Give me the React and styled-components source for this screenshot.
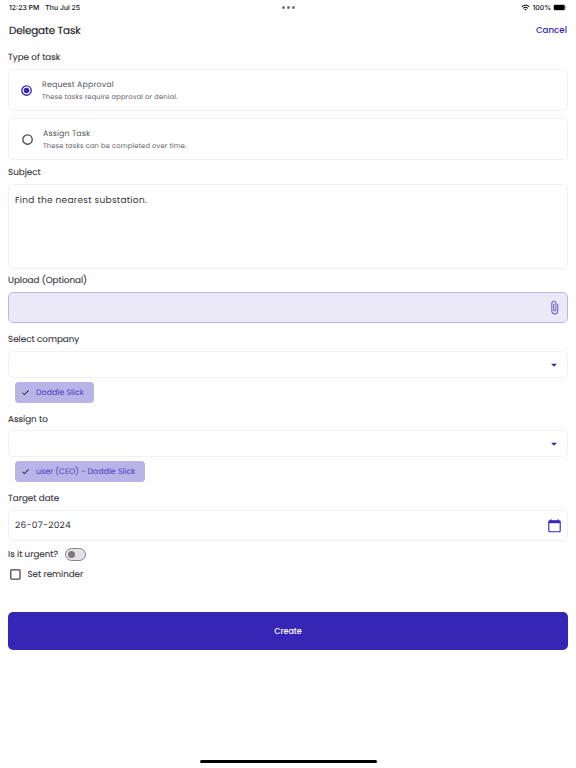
import { useState } from "react";
import styled, { createGlobalStyle } from "styled-components";
import { MdWifi, MdAttachFile, MdCheck, MdArrowDropDown } from "react-icons/md";

export default function App() {
    const [taskType, setTaskType] = useState("approval");
    const [subject, setSubject] = useState("Find the nearest substation.");

    return (
        <>
            <GlobalStyle />
            <Screen>
                <StatusBar>
                    <StatusTime><span>12:23 PM</span><span>Thu Jul 25</span></StatusTime>
                    <Dots><Dot /><Dot /><Dot /></Dots>
                    <StatusRight>
                        <MdWifi size={9} />
                        <span>100%</span>
                        <BatteryIcon />
                    </StatusRight>
                </StatusBar>
                <Header>
                    <Title>Delegate Task</Title>
                    <CancelButton>Cancel</CancelButton>
                </Header>
                <Form>
                    <Label $height={23} $top={2}>Type of task</Label>
                    <TaskOption
                        title="Request Approval"
                        info="These tasks require approval or denial."
                        checked={taskType === "approval"}
                        onClick={() => setTaskType("approval")}
                    />
                    <TaskOption
                        title="Assign Task"
                        info="These tasks can be completed over time."
                        checked={taskType === "assign"}
                        onClick={() => setTaskType("assign")}
                    />
                    <Label $height={24} $top={2}>Subject</Label>
                    <SubjectInput value={subject} onChange={(e) => setSubject(e.target.value)} spellCheck={false} />
                    <Label $height={23} $top={2}>Upload (Optional)</Label>
                    <UploadBox><MdAttachFile size={15} /></UploadBox>
                    <Label $height={28} $top={7}>Select company</Label>
                    <SelectBox><MdArrowDropDown size={14} /></SelectBox>
                    <Chip $width={79}><MdCheck size={9} /><ChipText>Doddle Slick</ChipText></Chip>
                    <Label $height={27} $top={7}>Assign to</Label>
                    <SelectBox><MdArrowDropDown size={14} /></SelectBox>
                    <Chip $width={130}><MdCheck size={9} /><ChipText>user (CEO) - Doddle Slick</ChipText></Chip>
                    <Label $height={28} $top={6}>Target date</Label>
                    <DateBox><DateText>26-07-2024</DateText><CalendarIcon /></DateBox>
                    <UrgentRow><RowText>Is it urgent?</RowText><Toggle><Knob /></Toggle></UrgentRow>
                    <ReminderRow><CheckBoxIcon /><RowText>Set reminder</RowText></ReminderRow>
                    <CreateButton>Create</CreateButton>
                </Form>
                <HomeBar />
            </Screen>
        </>
    );
}

function TaskOption({ title, info, checked, onClick }) {
    return (
        <OptionCard onClick={onClick} $checked={checked}>
            <RadioIcon checked={checked} />
            <OptionTexts>
                <OptionTitle>{title}</OptionTitle>
                <OptionInfo>{info}</OptionInfo>
            </OptionTexts>
        </OptionCard>
    );
}

function RadioIcon({ checked }) {
    const color = checked ? "#3626b5" : "#4c4c51";
    return (
        <svg width="11" height="11" viewBox="0 0 11 11">
            <circle cx="5.5" cy="5.5" r="4.7" fill="#fff" stroke={color} strokeWidth="1.35" />
            {checked && <circle cx="5.5" cy="5.5" r="2.8" fill={color} />}
        </svg>
    );
}

function CheckBoxIcon() {
    return (
        <svg width="11" height="11" viewBox="0 0 11 11">
            <rect x="0.8" y="0.8" width="9.2" height="9.2" rx="0.8" fill="#fff" stroke="#444449" strokeWidth="1.25" />
        </svg>
    );
}

function BatteryIcon() {
    return (
        <svg width="14" height="7" viewBox="0 0 14 7">
            <rect x="0.3" y="0.5" width="12" height="6" rx="1.8" fill="#fff" stroke="#999" strokeWidth="0.5" />
            <rect x="0.9" y="1" width="10.8" height="5" rx="1.2" fill="#000" />
            <path d="M12.9 2.5v2q.8-.3.8-1t-.8-1z" fill="#999" />
        </svg>
    );
}

function CalendarIcon() {
    return (
        <svg width="13" height="14" viewBox="0 0 13 14">
            <path d="M3 0.3v2M10 0.3v2" stroke="#3626b5" strokeWidth="1.1" />
            <rect x="0.8" y="1.8" width="11.4" height="11" rx="1" fill="none" stroke="#3626b5" strokeWidth="1.1" />
            <rect x="0.8" y="1.8" width="11.4" height="2.4" fill="#3626b5" />
        </svg>
    );
}

const GlobalStyle = createGlobalStyle`
    * {
        box-sizing: border-box;
    }
    body {
        margin: 0;
        background: #fefefe;
        color: #333337;
        font-family: Poppins, Inter, "Liberation Sans", sans-serif;
        text-rendering: geometricPrecision;
    }
    button, textarea {
        font: inherit;
    }
    svg {
        flex-shrink: 0;
    }
`

const Screen = styled.div`
    display: flex;
    flex-direction: column;
    height: 768px;
    overflow: hidden;
`

const StatusBar = styled.div`
    display: grid;
    grid-template-columns: 1fr auto 1fr;
    align-items: center;
    height: 14px;
    padding: 0 9px;
    font-family: Inter, "Liberation Sans", sans-serif;
    font-size: 6.9px;
    font-weight: 500;
    color: #111;
`

const StatusTime = styled.div`
    display: flex;
    gap: 6px;
`

const Dots = styled.div`
    display: flex;
    gap: 2px;
`

const Dot = styled.div`
    width: 3px;
    height: 3px;
    border-radius: 50%;
    background: #777;
`

const StatusRight = styled.div`
    display: flex;
    align-items: center;
    justify-content: flex-end;
    gap: 2px;
`

const Header = styled.div`
    display: flex;
    align-items: center;
    justify-content: space-between;
    height: 32px;
    padding: 0 9px;
`

const Title = styled.div`
    padding-top: 1px;
    font-size: 10.4px;
    letter-spacing: -0.14px;
    color: #26262a;
    -webkit-text-stroke: 0.2px;
`

const CancelButton = styled.button`
    padding: 0;
    border: 0;
    background: none;
    color: #3626b5;
    font-size: 8.7px;
    font-weight: 500;
`

const Form = styled.div`
    display: flex;
    flex-direction: column;
    padding: 0 8px;
`

const Label = styled.div`
    display: flex;
    align-items: center;
    height: ${(props) => props.$height}px;
    padding-top: ${(props) => props.$top || 0}px;
    font-size: 8.75px;
    white-space: nowrap;
    -webkit-text-stroke: 0.1px;
`

const Box = styled.div`
    display: flex;
    align-items: center;
    border: 1px solid #f1f1f4;
    border-radius: 5px;
    background: #fff;
`

const OptionCard = styled(Box)`
    height: 42px;
    gap: 10px;
    padding-left: ${(props) => (props.$checked ? 12 : 13)}px;

    & + & {
        margin-top: 7px;
    }
`

const OptionTexts = styled.div`
    display: flex;
    flex-direction: column;
    gap: 1px;
    padding-top: 2px;
`

const OptionTitle = styled.div`
    font-size: 7.9px;
    line-height: 12px;
    letter-spacing: 0.13px;
    color: #55555a;
`

const OptionInfo = styled.div`
    font-size: 6.7px;
    line-height: 12px;
    letter-spacing: 0.17px;
    color: #5c5c61;
`

const SubjectInput = styled.textarea`
    height: 85px;
    padding: 8px 6px;
    border: 1px solid #f1f1f4;
    border-radius: 5px;
    outline: 0;
    resize: none;
    color: #333337;
    font-size: 9px;
    line-height: 14px;
    letter-spacing: 0.28px;
`

const UploadBox = styled(Box)`
    justify-content: flex-end;
    height: 31px;
    padding-right: 5px;
    border-color: #bdb7e5;
    background: #ebe8f7;
    color: #5b4dc2;
`

const SelectBox = styled(Box)`
    justify-content: flex-end;
    height: 27px;
    padding-right: 6px;
    color: #3626b5;
`

const Chip = styled.div`
    display: flex;
    align-items: center;
    gap: 6px;
    width: ${(props) => props.$width}px;
    height: 21px;
    margin: 4px 0 0 7px;
    padding-left: 6px;
    border-radius: 4px;
    background: #b9b3e7;
    color: #222;
    white-space: nowrap;
`

const ChipText = styled.span`
    font-size: 7.95px;
    color: #4a3ac0;
`

const DateBox = styled(Box)`
    justify-content: space-between;
    height: 31px;
    padding: 0 6px;
`

const DateText = styled.span`
    padding-top: 2px;
    font-size: 9px;
    letter-spacing: 0.3px;
`

const UrgentRow = styled.div`
    display: flex;
    align-items: center;
    gap: 7px;
    height: 20px;
    margin-top: 3px;
`

const RowText = styled.span`
    padding-top: 2px;
    font-size: 8.7px;
    white-space: nowrap;
    -webkit-text-stroke: 0.1px;
`

const Toggle = styled.div`
    display: flex;
    align-items: center;
    width: 21px;
    height: 13px;
    padding-left: 2px;
    border: 1px solid #858489;
    border-radius: 7px;
    background: #e4e2e8;
`

const Knob = styled.div`
    width: 7px;
    height: 7px;
    border-radius: 50%;
    background: #7c7a80;
`

const ReminderRow = styled.div`
    display: flex;
    align-items: center;
    gap: 7px;
    height: 21px;
    padding-left: 1.5px;
`

const CreateButton = styled.button`
    height: 38px;
    margin-top: 27px;
    padding: 2px 0 0;
    border: 0;
    border-radius: 5px;
    background: #3626b5;
    color: #fff;
    font-size: 8px;
    font-weight: 500;
`

const HomeBar = styled.div`
    width: 177px;
    height: 3px;
    margin: auto auto 5px;
    border-radius: 2px;
    background: #000;
`
